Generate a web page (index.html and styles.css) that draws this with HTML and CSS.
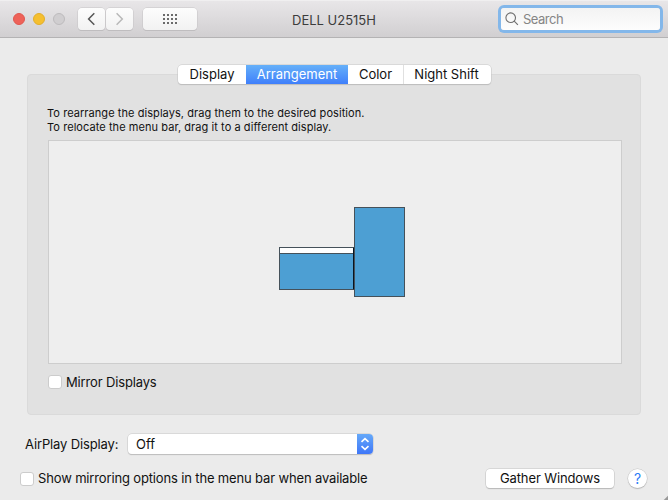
FILE: index.html
```html
<!DOCTYPE html>
<html lang="en">
<head>
<meta charset="utf-8">
<title>DELL U2515H</title>
<link rel="stylesheet" href="styles.css">
</head>
<body>
<div class="window">
  <header class="toolbar">
    <div class="lights">
      <span class="light close"></span>
      <span class="light minimize"></span>
      <span class="light disabled"></span>
    </div>
    <div class="nav">
      <span class="tool"><svg width="27" height="22" viewBox="0 0 27 22"><path d="M16.3 5.3 10.6 11l5.7 5.7" fill="none" stroke="#555" stroke-width="1.5"/></svg></span>
      <span class="tool"><svg width="27" height="22" viewBox="0 0 27 22"><path d="M10.6 5.3 16.3 11l-5.7 5.7" fill="none" stroke="#b8b8b8" stroke-width="1.5"/></svg></span>
    </div>
    <span class="tool grid">
      <svg width="14" height="10" viewBox="0 0 14 10"><path d="M0 1h14M0 5h14M0 9h14" stroke="#6b6b6b" stroke-width="2" stroke-dasharray="2 2"/></svg>
    </span>
    <h1 class="title">DELL U2515H</h1>
    <div class="search">
      <svg width="14" height="14" viewBox="0 0 14 14" fill="none" stroke="#6e6e6e" stroke-width="1.1"><circle cx="5.7" cy="5.7" r="4.8"/><path d="m9.2 9.2 3.7 3.7"/></svg>
      <span>Search</span>
    </div>
  </header>
  <main class="content">
    <section class="panel">
      <nav class="tabs">
        <span class="tab display">Display</span>
        <span class="tab arrangement">Arrangement</span>
        <span class="tab color">Color</span>
        <span class="tab night">Night Shift</span>
      </nav>
      <p class="hint">To rearrange the displays, drag them to the desired position.<br>To relocate the menu bar, drag it to a different display.</p>
      <div class="canvas">
        <div class="screen primary"><div class="menubar"></div></div>
        <div class="screen secondary"></div>
      </div>
      <label class="check mirror"><span class="box"></span><span>Mirror Displays</span></label>
    </section>
    <div class="airplay">
      <span class="airplay-label">AirPlay Display:</span>
      <div class="select"><span>Off</span>
        <span class="stepper"><svg width="16" height="20" viewBox="0 0 16 20" fill="none" stroke="#fff" stroke-width="1.6"><path d="M4.5 7.8 8 4.6l3.5 3.2M4.5 12.2 8 15.4l3.5-3.2"/></svg></span>
      </div>
    </div>
    <footer class="bottom">
      <label class="check options"><span class="box"></span><span class="options-text">Show mirroring options in the menu bar when available</span></label>
      <span class="button">Gather Windows</span>
      <span class="help">?</span>
    </footer>
  </main>
  <i class="corner"></i>
</div>
</body>
</html>
```

FILE: styles.css
```css
* { box-sizing: border-box; }
body {
  margin: 0;
  font: 13px/16px Inter, "Liberation Sans", sans-serif;
  color: #111;
}
svg { display: block; }
.window {
  position: relative;
  width: 668px;
  height: 500px;
  overflow: hidden;
  background: #ebebeb;
}
.toolbar {
  display: flex;
  align-items: center;
  height: 38px;
  padding: 0 8px 0 13px;
  background: linear-gradient(#e8e6e8, #d1cfd1);
  border-top: 1px solid #f0eff0;
  border-bottom: 1px solid #b4b3b4;
}
.lights { display: flex; gap: 8px; width: 65px; }
.light { width: 12px; height: 12px; border-radius: 50%; border: 1px solid; }
.close { background: #ee6259; border-color: #e0574f; }
.minimize { background: #f5bf2f; border-color: #e2ae2a; }
.disabled { background: #d0ced0; border-color: #bdbbbd; }
.nav { display: flex; gap: 1px; margin-right: 10px; }
.tool {
  width: 27px;
  height: 22px;
  border-radius: 4px;
  background: linear-gradient(#fdfdfd, #f2f2f2);
  box-shadow: 0 0 0 .5px #c5c3c5, 0 1px 0 #b9b7b9;
}
.grid { display: flex; align-items: center; justify-content: center; width: 54px; }
.title { width: 83px; margin: 1px 0 0 95px; font-size: 13px; font-weight: 400; color: #3c3c3c; white-space: nowrap; }
.search {
  display: flex;
  align-items: center;
  gap: 4px;
  width: 159px;
  height: 22px;
  margin-left: auto;
  padding-left: 4px;
  border-radius: 3px;
  background: linear-gradient(#f3f3f3, #fdfdfd);
  box-shadow: 0 0 0 3px #83b7ea;
  color: #858585;
  letter-spacing: -.5px;
}
.content { padding: 36px 20px 0; }
.panel {
  width: 614px;
  height: 341px;
  margin-left: 7px;
  padding: 0 20px;
  background: #e1e1e1;
  border: 1px solid #dadada;
  border-radius: 4px;
}
.tabs {
  display: flex;
  width: 313px;
  height: 19px;
  margin: -10px 0 0 130px;
  background: #fff;
  border-radius: 4px;
  box-shadow: 0 0 0 .5px #c7c7c7, 0 1px 1px #b3b3b3;
}
.tab { line-height: 19px; text-align: center; white-space: nowrap; }
.display { width: 68px; }
.arrangement { width: 102px; color: #fff; background: linear-gradient(#65b0f9, #3f7ffb); }
.color { width: 55px; }
.night { width: 88px; padding-right: 2px; border-left: 1px solid #e0e0e0; }
.hint { margin: 22px 0 6px -1px; font-size: 11px; line-height: 14px; letter-spacing: .065px; white-space: nowrap; }
.canvas { position: relative; width: 574px; height: 224px; background: #eee; border: 1px solid #cdcdcd; }
.screen { position: absolute; background: #4d9fd3; border: 1px solid #45515a; }
.primary { left: 230px; top: 106px; width: 76px; height: 43px; border-right: 2px solid #071522; }
.secondary { left: 305px; top: 66px; width: 51px; height: 90px; }
.menubar { height: 6px; background: #fff; border-bottom: 1px solid #45515a; }
.check { display: flex; align-items: center; gap: 4px; letter-spacing: -.15px; white-space: nowrap; }
.box { width: 14px; height: 14px; background: #fff; border: 1px solid #ccc; border-radius: 3px; }
.mirror { margin-top: 10px; }
.airplay { display: flex; align-items: center; height: 20px; margin-top: 19px; padding-left: 5px; }
.airplay-label { width: 103px; letter-spacing: -.13px; white-space: nowrap; }
.select {
  display: flex;
  justify-content: space-between;
  width: 245px;
  height: 20px;
  padding-left: 8px;
  line-height: 20px;
  background: #fff;
  border-radius: 4px;
  box-shadow: 0 0 0 .5px #c7c7c7, 0 1px 1px #b3b3b3;
}
.stepper { width: 16px; border-radius: 0 4px 4px 0; background: linear-gradient(#65a9f9, #3f77f8); }
.bottom { display: flex; align-items: center; height: 21px; margin-top: 14px; }
.options { width: 466px; }
.options-text { padding-bottom: 1px; }
.button {
  width: 128px;
  height: 19px;
  line-height: 19px;
  text-align: center;
  letter-spacing: -.12px;
  background: #fff;
  border-radius: 4px;
  box-shadow: 0 0 0 .5px #c4c4c4, 0 1px 1px #b0b0b0;
}
.help {
  width: 19px;
  height: 19px;
  margin-left: 14px;
  line-height: 19px;
  font-size: 14px;
  text-align: center;
  color: #2d7bf7;
  background: #fff;
  border-radius: 50%;
  box-shadow: 0 0 0 .5px #c4c4c4, 0 1px 1px #b0b0b0;
}
.corner { position: absolute; right: -3px; bottom: -3px; width: 6px; height: 6px; background: #999; transform: rotate(45deg); }
```
